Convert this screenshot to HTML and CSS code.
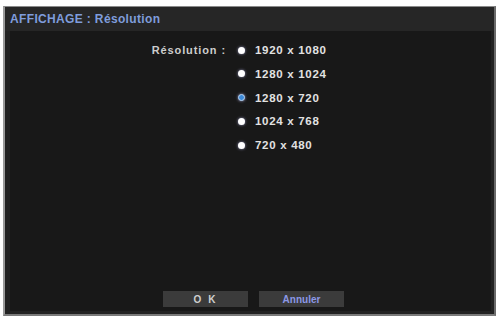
FILE: index.html
```html
<!DOCTYPE html>
<html lang="fr">
<head>
  <meta charset="UTF-8">
  <title>AFFICHAGE : Résolution</title>
  <link rel="stylesheet" href="styles.css">
</head>
<body>
  <div class="screen">
    <div class="titlebar">AFFICHAGE : Résolution</div>
    <div class="content">
      <div class="setting">
        <div class="label">Résolution :</div>
        <ul class="options">
          <li class="option"><span class="dot"></span>1920 x 1080</li>
          <li class="option"><span class="dot"></span>1280 x 1024</li>
          <li class="option selected"><span class="dot"></span>1280 x 720</li>
          <li class="option"><span class="dot"></span>1024 x 768</li>
          <li class="option"><span class="dot"></span>720 x 480</li>
        </ul>
      </div>
      <div class="buttons">
        <button class="btn ok">O K</button>
        <button class="btn cancel">Annuler</button>
      </div>
    </div>
  </div>
</body>
</html>
```

FILE: styles.css
```css
body {
  margin: 0;
  padding: 6px 2px 0 3px;
  background: #fff;
  font-family: "Liberation Sans", Arial, sans-serif;
  overflow: hidden;
}
.screen {
  height: 310px;
  background: #222;
  border-left: 2px solid #9a9a9a;
  border-right: 2px solid #6a6a6a;
  border-top: 1px solid #8a8a8a;
  border-bottom: 2px solid #7a7a7a;
  display: flex;
  flex-direction: column;
  box-sizing: border-box;
}
.titlebar {
  height: 24px;
  line-height: 24px;
  padding-left: 5px;
  background: #262626;
  color: #7f9ddc;
  font-size: 12px;
  font-weight: bold;
  letter-spacing: 0.35px;
}
.content {
  flex: 1;
  margin: 0 3px 3px 5px;
  background: #181818;
  display: flex;
  flex-direction: column;
}
.setting {
  display: flex;
  padding-top: 12px;
  flex: 1;
}
.label {
  width: 216px;
  text-align: right;
  color: #cdcdcd;
  font-size: 11px;
  font-weight: bold;
  letter-spacing: 0.9px;
  line-height: 14px;
  padding-right: 12px;
}
.options {
  list-style: none;
  margin: 0;
  padding: 0;
}
.option {
  display: flex;
  align-items: center;
  height: 14px;
  margin-bottom: 9.8px;
  color: #e2e2e2;
  font-size: 11.5px;
  font-weight: bold;
  letter-spacing: 0.7px;
}
.dot {
  width: 7px;
  height: 7px;
  border-radius: 50%;
  background: #fff;
  box-shadow: 0 0 3px rgba(200, 200, 255, 0.7);
  margin-right: 10px;
}
.selected .dot {
  background: #3d8ad8;
  border: 1px solid #b9d4ef;
  width: 5px;
  height: 5px;
}
.buttons {
  display: flex;
  justify-content: center;
  gap: 11px;
  padding-bottom: 4px;
  padding-left: 6px;
}
.btn {
  width: 85px;
  height: 16px;
  padding: 0;
  border: none;
  background: #3b3b3b;
  font-family: "Liberation Sans", Arial, sans-serif;
  font-size: 10px;
  font-weight: bold;
}
.ok {
  color: #cfcfcf;
  letter-spacing: 2px;
}
.cancel {
  color: #8b98e6;
}
```
